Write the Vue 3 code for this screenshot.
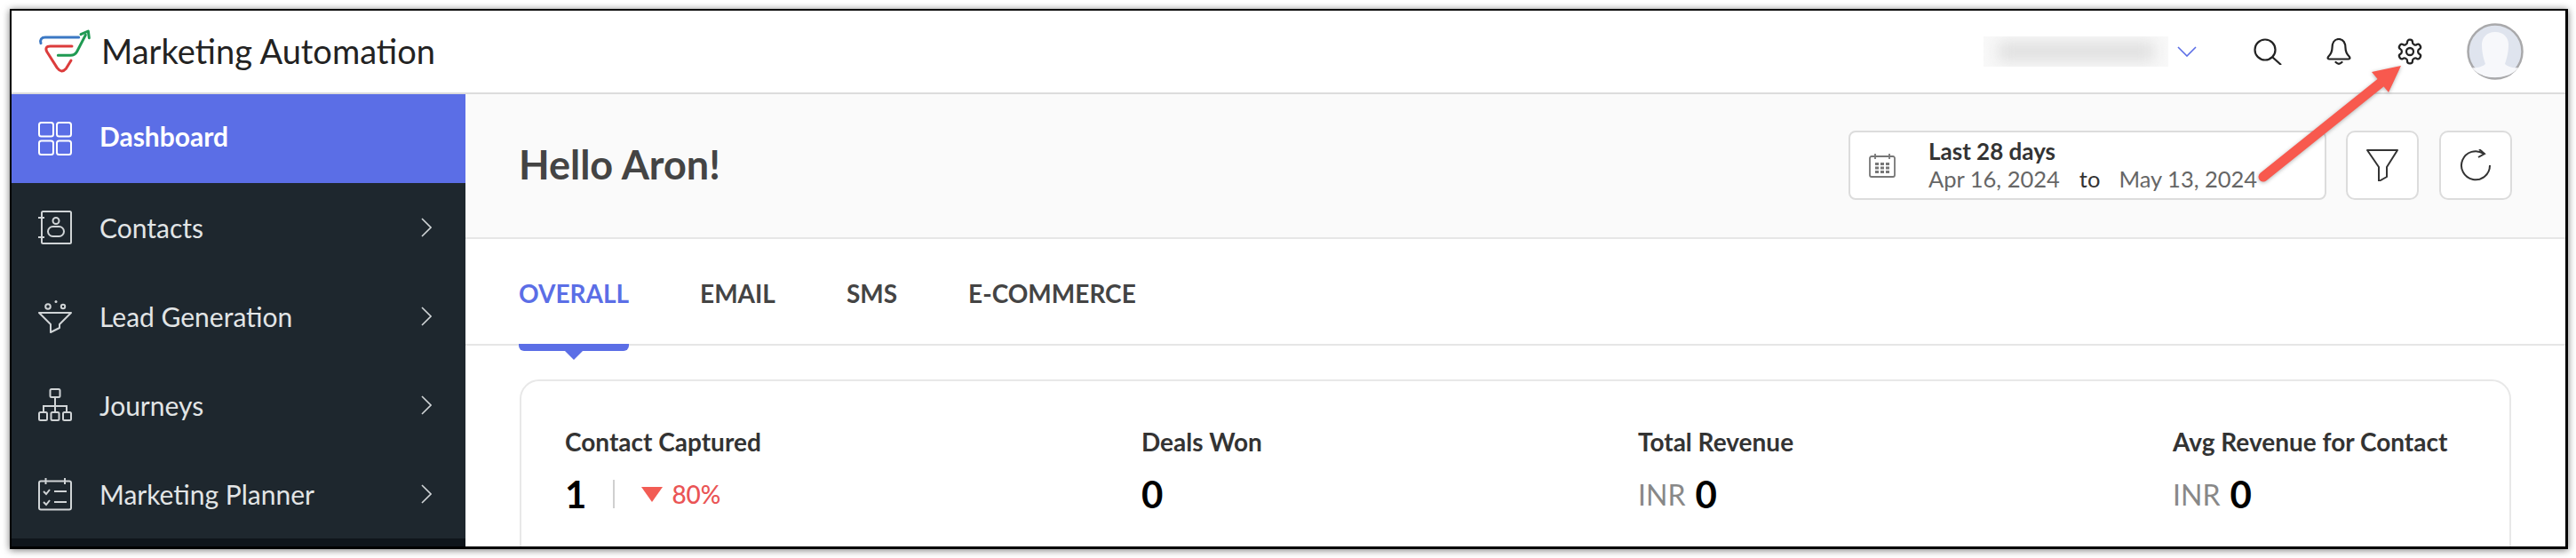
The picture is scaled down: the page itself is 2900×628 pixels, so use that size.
<template>
  <div class="page">
    <div class="frame">
      <header class="topbar">
        <svg class="logo" viewBox="0 0 225 180" fill="none" stroke-width="9" stroke-linecap="round" stroke-linejoin="round">
          <path d="M30 62C26 50 32 42 45 42L158 42" stroke="#3b78c4" />
          <path d="M135 72L62 72Q42 72 50 90L85 145Q100 165 115 148L132 120" stroke="#dc3c3c" />
          <path d="M88 103L130 103Q145 103 152 90L181 34" stroke="#1f9a52" />
          <path d="M165 32L190 21L193 44" stroke="#1f9a52" />
        </svg>
        <span class="app-name">Marketing Automation</span>
        <div class="org"><div class="org-smear" /></div>
        <svg class="org-caret" viewBox="0 0 22 12" fill="none" stroke="#5b6ee6" stroke-width="1.6"><path d="M1 1L11 11L21 1" /></svg>
        <svg class="tool search" viewBox="0 0 32 30" fill="none" stroke="#222" stroke-width="2.2">
          <circle cx="13" cy="13" r="11.5" />
          <path d="M21.5 21.5L31 30" />
        </svg>
        <svg class="tool bell" viewBox="0 0 28 30" fill="none" stroke="#222" stroke-width="2.2" stroke-linecap="round">
          <path d="M14 1C8.500 1 6.500 6 6.500 11C6.500 16 5 18 2 21C1 22.500 2 23.500 3.500 23.500H24.500C26 23.500 27 22.500 26 21C23 18 21.500 16 21.500 11C21.500 6 19.500 1 14 1Z" />
          <path d="M10.500 27Q14 30.500 17.500 27" />
        </svg>
        <svg class="tool gear" viewBox="0 0 24 24" fill="none" stroke="#222" stroke-width="1.7">
          <path d="M12.220 2h-.44a2 2 0 0 0-2 2v.18a2 2 0 0 1-1 1.730l-.43.25a2 2 0 0 1-2 0l-.15-.08a2 2 0 0 0-2.730.73l-.22.38a2 2 0 0 0 .73 2.730l.15.1a2 2 0 0 1 1 1.720v.51a2 2 0 0 1-1 1.740l-.15.09a2 2 0 0 0-.73 2.730l.22.38a2 2 0 0 0 2.730.73l.15-.08a2 2 0 0 1 2 0l.43.25a2 2 0 0 1 1 1.730V20a2 2 0 0 0 2 2h.44a2 2 0 0 0 2-2v-.18a2 2 0 0 1 1-1.730l.43-.25a2 2 0 0 1 2 0l.15.08a2 2 0 0 0 2.730-.73l.22-.39a2 2 0 0 0-.73-2.730l-.15-.08a2 2 0 0 1-1-1.740v-.5a2 2 0 0 1 1-1.740l.15-.09a2 2 0 0 0 .73-2.730l-.22-.38a2 2 0 0 0-2.730-.73l-.15.08a2 2 0 0 1-2 0l-.43-.25a2 2 0 0 1-1-1.730V4a2 2 0 0 0-2-2z" />
          <circle cx="12" cy="12" r="3" />
        </svg>
        <svg class="avatar" viewBox="0 0 64 64">
          <circle cx="32" cy="32" r="30.500" fill="#dfe4ee" stroke="#a9a9ab" stroke-width="2.500" />
          <path d="M32 10C22 10 17 17 17 24C17 31 18 37 21 46C18 49 12 51 6 50C11 57 20 61 32 61C44 61 53 57 58 50C52 51 46 49 43 46C46 37 47 31 47 24C47 17 42 10 32 10Z" fill="#f7f8fb" />
        </svg>
      </header>

      <div class="body">
        <nav class="sidebar">
          <a v-for="item in navItems" :key="item.key" class="nav-row" :class="{ active: item.active }">
            <svg class="nav-icon" viewBox="0 0 38 38" fill="none" stroke="currentColor" stroke-width="2">
              <template v-if="item.key === 'dashboard'">
                <rect x="1" y="1" width="16" height="15.500" rx="2.500" />
                <rect x="21" y="1" width="16" height="15.500" rx="2.500" />
                <rect x="1" y="21.500" width="16" height="15.500" rx="2.500" />
                <rect x="21" y="21.500" width="16" height="15.500" rx="2.500" />
              </template>
              <template v-else-if="item.key === 'contacts'">
                <rect x="4" y="1" width="33" height="36" rx="1.500" />
                <path d="M0 8H7M0 30H7" />
                <circle cx="20" cy="11.500" r="3.500" />
                <rect x="11" y="18" width="18" height="11" rx="5.500" />
              </template>
              <template v-else-if="item.key === 'leads'">
                <circle cx="11" cy="8" r="2.800" />
                <circle cx="20" cy="2.500" r="1.500" fill="currentColor" stroke="none" />
                <circle cx="28" cy="8" r="2.200" />
                <path d="M1 15H37L24 28V32L14 37V28Z" stroke-linejoin="round" />
              </template>
              <template v-else-if="item.key === 'journeys'">
                <rect x="13.500" y="1" width="11" height="9" rx="1.500" />
                <path d="M19 10V26M6 26V20H32V26" />
                <rect x="1" y="27" width="9" height="9" rx="1.500" />
                <rect x="14.500" y="27" width="9" height="9" rx="1.500" />
                <rect x="28" y="27" width="9" height="9" rx="1.500" />
              </template>
              <template v-else>
                <rect x="1" y="4.500" width="36" height="32" rx="2" />
                <path d="M8.500 1V8M30 1V8" />
                <path d="M6 16L9 19L13 14M6 28L9 31L13 26" />
                <path d="M18 16H32M18 28H32" />
              </template>
            </svg>
            <span class="nav-label">{{ item.label }}</span>
            <svg v-if="!item.active" class="nav-arrow" viewBox="0 0 12 22" fill="none" stroke="currentColor" stroke-width="1.600"><path d="M1 1L11 11L1 21" /></svg>
          </a>
          <div class="nav-rest" />
        </nav>

        <main class="main">
          <section class="head">
            <h1 class="hello">Hello Aron!</h1>
            <div class="range">
              <svg class="cal" viewBox="0 0 30 28" fill="none" stroke="#777" stroke-width="1.800">
                <path d="M7 4H3A2 2 0 0 0 1 6V25A2 2 0 0 0 3 27H27A2 2 0 0 0 29 25V6A2 2 0 0 0 27 4H23M7 1V7M23 1V7M7 4H23" />
                <path d="M7 12.500H11M13 12.500H17M19 12.500H23M7 17H11M13 17H17M19 17H23M7 21.500H11M13 21.500H17M19 21.500H23" stroke-width="3" />
              </svg>
              <div class="range-text">
                <div class="range-name">Last 28 days</div>
                <div class="range-dates">Apr 16, 2024<span class="range-to">to</span>May 13, 2024</div>
              </div>
            </div>
            <button class="square filter">
              <svg viewBox="0 0 36 36" fill="none" stroke="#333" stroke-width="2" stroke-linejoin="round"><path d="M1 1H35L23 20V31L14 36V20Z" /></svg>
            </button>
            <button class="square">
              <svg viewBox="0 0 36 36" fill="none" stroke="#333" stroke-width="2"><path d="M27 5A16 16 0 1 0 34 18" /><path d="M22 0L28 5L21 9" /></svg>
            </button>
          </section>

          <div class="tabs">
            <div v-for="tab in tabs" :key="tab" class="tab" :class="{ current: tab === 'OVERALL' }">
              {{ tab }}
              <i v-if="tab === 'OVERALL'" class="tab-mark" />
            </div>
          </div>

          <div class="content">
            <div class="card">
              <div v-for="m in metrics" :key="m.label" class="metric">
                <div class="metric-label">{{ m.label }}</div>
                <div class="metric-value">
                  <span v-if="m.unit" class="unit">{{ m.unit }}</span>
                  <span class="num">{{ m.value }}</span>
                  <template v-if="m.change">
                    <span class="bar" />
                    <span class="down" />
                    <span class="change">{{ m.change }}</span>
                  </template>
                </div>
              </div>
            </div>
          </div>
        </main>
      </div>
    </div>

    <!-- annotation arrow on top of the screenshot -->
    <svg class="pointer" viewBox="0 0 2900 628">
      <path d="M2548 199L2684 90" stroke="#f8594e" stroke-width="11" stroke-linecap="round" />
      <path d="M2703 74L2670 81L2689 104Z" fill="#f8594e" />
    </svg>
  </div>
</template>

<script setup>
const navItems = [
  { key: 'dashboard', label: 'Dashboard', active: true },
  { key: 'contacts', label: 'Contacts' },
  { key: 'leads', label: 'Lead Generation' },
  { key: 'journeys', label: 'Journeys' },
  { key: 'planner', label: 'Marketing Planner' },
]

const tabs = ['OVERALL', 'EMAIL', 'SMS', 'E-COMMERCE']

const metrics = [
  { label: 'Contact Captured', value: '1', change: '80%' },
  { label: 'Deals Won', value: '0' },
  { label: 'Total Revenue', value: '0', unit: 'INR' },
  { label: 'Avg Revenue for Contact', value: '0', unit: 'INR' },
]
</script>

<style>
html, body {
  margin: 0;
  background: #fff;
}
</style>

<style scoped>
.page {
  position: relative;
  width: 2900px;
  height: 628px;
  padding: 10px 0 0 11px;
  box-sizing: border-box;
  overflow: hidden;
  font-family: Lato, "Liberation Sans", sans-serif;
}

.frame {
  width: 2880px;
  height: 608px;
  box-sizing: border-box;
  border: solid #000;
  border-width: 2px 3px 3px 2px;
  box-shadow: 0 1px 8px rgba(0, 0, 0, 0.55);
  background: #fff;
  display: flex;
  flex-direction: column;
  overflow: hidden;
}

.topbar {
  flex: 0 0 94px;
  box-sizing: border-box;
  display: flex;
  align-items: center;
  padding: 0 47px 0 23px;
  border-bottom: 2px solid #dcdcdc;
  background: #fff;
}

.logo {
  width: 75px;
  height: 60px;
  flex-shrink: 0;
}

.app-name {
  margin: -3px 0 0 3px;
  font-size: 38px;
  color: #222;
  white-space: nowrap;
}

.org {
  margin-left: auto;
  width: 208px;
  height: 34px;
  background: #f8f8f8;
  overflow: hidden;
  display: flex;
  align-items: center;
  justify-content: center;
}

.org-smear {
  width: 175px;
  height: 22px;
  background: #e0e0e0;
  filter: blur(8px);
}

.org-caret {
  margin-left: 10px;
  width: 22px;
  height: 12px;
}

.tool {
  flex-shrink: 0;
  height: 30px;
}

.search { width: 32px; margin-left: 64px; }
.bell { width: 28px; margin-left: 50px; }
.gear { width: 32px; margin-left: 50px; height: 32px; }

.avatar {
  margin-left: 48px;
  width: 64px;
  height: 64px;
  flex-shrink: 0;
}

.body {
  flex: 1;
  display: flex;
  min-height: 0;
}

.sidebar {
  flex: 0 0 511px;
  display: flex;
  flex-direction: column;
  background: #1e272e;
  color: #d0d4d6;
}

.nav-row {
  flex: 0 0 100px;
  display: flex;
  align-items: center;
  padding: 0 38px 0 30px;
}

.nav-row.active {
  background: #5b6ee6;
  color: #fff;
}

.nav-row.active .nav-label {
  margin-top: -6px;
  font-weight: 700;
  color: #fff;
}

.nav-icon {
  width: 38px;
  height: 38px;
  flex-shrink: 0;
}

.nav-label {
  margin-left: 31px;
  font-size: 30px;
  color: #e2e5e6;
}

.nav-arrow {
  margin-left: auto;
  width: 12px;
  height: 22px;
}

.nav-rest {
  flex: 1;
  background: #0f151b;
}

.main {
  flex: 1;
  min-width: 0;
  display: flex;
  flex-direction: column;
}

.head {
  flex: 0 0 163px;
  box-sizing: border-box;
  display: flex;
  align-items: center;
  padding: 0 60px 2px 60px;
  background: #fafafa;
  border-bottom: 2px solid #e6e6e6;
}

.hello {
  margin: -2px auto 0 0;
  font-size: 45px;
  font-weight: 700;
  color: #444;
}

.range {
  width: 538px;
  height: 78px;
  box-sizing: border-box;
  display: flex;
  align-items: center;
  padding-left: 21px;
  background: #fff;
  border: 2px solid #dcdcdc;
  border-radius: 8px;
}

.cal {
  width: 30px;
  height: 28px;
  flex-shrink: 0;
}

.range-text {
  margin-left: 37px;
  line-height: 31px;
}

.range-name {
  font-size: 26px;
  font-weight: 700;
  color: #333;
}

.range-dates {
  font-size: 25.500px;
  color: #666;
  white-space: nowrap;
}

.range-to {
  margin: 0 21px 0 22px;
  color: #333;
}

.square {
  width: 82px;
  height: 78px;
  margin-left: 23px;
  padding: 0;
  box-sizing: border-box;
  display: flex;
  align-items: center;
  justify-content: center;
  background: #fff;
  border: 2px solid #dcdcdc;
  border-radius: 10px;
}

.square.filter {
  margin-left: 22px;
}

.square svg {
  width: 36px;
  height: 36px;
}

.tabs {
  flex: 0 0 120px;
  box-sizing: border-box;
  display: flex;
  gap: 80px;
  padding: 44px 0 0 60px;
  border-bottom: 2px solid #e6e6e6;
  background: #fff;
}

.tab {
  position: relative;
  align-self: flex-start;
  font-size: 28px;
  font-weight: 700;
  line-height: 34px;
  color: #444;
}

.tab.current {
  color: #5b6ee6;
}

.tab-mark {
  position: absolute;
  left: 0;
  right: 0;
  top: 74px;
  height: 8px;
  background: #5b6ee6;
  border-radius: 0 0 6px 6px;
}

.tab-mark::after {
  content: "";
  position: absolute;
  left: 50%;
  top: 8px;
  margin-left: -10px;
  border: solid transparent;
  border-width: 10px 10px 0;
  border-top-color: #5b6ee6;
}

.content {
  flex: 1;
  min-height: 0;
  padding: 38px 61px 0 61px;
  background: #fff;
}

.card {
  box-sizing: border-box;
  height: 260px;
  display: grid;
  grid-template-columns: 649px 559px 602px 1fr;
  padding: 52px 0 0 49px;
  background: #fff;
  border: 2px solid #e8e8e8;
  border-radius: 22px;
}

.metric-label {
  font-size: 28px;
  font-weight: 700;
  line-height: 32px;
  color: #333;
  white-space: nowrap;
}

.metric-value {
  margin-top: 21px;
  display: flex;
  align-items: center;
  height: 44px;
}

.unit {
  margin-right: 11px;
  font-size: 32px;
  color: #888;
}

.num {
  font-size: 42px;
  font-weight: 700;
  color: #000;
}

.bar {
  width: 2px;
  height: 32px;
  margin: 0 30px;
  background: #d0d0d0;
}

.down {
  width: 0;
  height: 0;
  border: solid transparent;
  border-width: 17px 12px 0;
  border-top-color: #f25c54;
}

.change {
  margin-left: 10px;
  font-size: 28px;
  font-weight: 500;
  color: #ea5455;
}

.pointer {
  position: absolute;
  left: 0;
  top: 0;
  width: 2900px;
  height: 628px;
  pointer-events: none;
  filter: drop-shadow(0 1px 2px rgba(0, 0, 0, 0.3));
}
</style>
